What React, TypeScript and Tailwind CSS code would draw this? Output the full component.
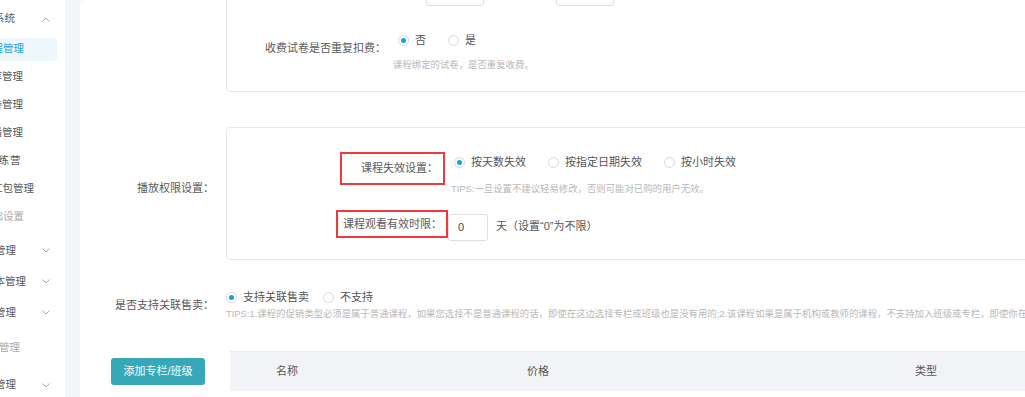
import React from 'react';

function Chevron({ up = false }: { up?: boolean }) {
  return (
    <svg width="8" height="5" viewBox="0 0 8 5" className="shrink-0">
      <polyline
        points={up ? '0.5,4.5 4,1 7.5,4.5' : '0.5,0.5 4,4 7.5,0.5'}
        fill="none"
        stroke="#a8a8a8"
        strokeWidth="1"
      />
    </svg>
  );
}

function Radio({ checked = false, label }: { checked?: boolean; label: string }) {
  return (
    <label className="flex items-center gap-[6px]">
      <span className="flex h-[11px] w-[11px] items-center justify-center rounded-full border border-[#d6d9de] bg-white">
        {checked && <span className="h-[5px] w-[5px] rounded-full bg-[#1a9fe0]" />}
      </span>
      <span className="text-[11px] leading-[16px] text-[#555]">{label}</span>
    </label>
  );
}

function SideItem({
  text,
  offset,
  active = false,
  light = false,
}: {
  text: string;
  offset: string;
  active?: boolean;
  light?: boolean;
}) {
  return (
    <div className="flex h-[28px] items-center">
      <div
        className={`flex h-[23px] w-[57px] items-center overflow-hidden rounded-r-[4px] ${
          active ? 'bg-[#eef7fc] text-[#1c9fd6]' : light ? 'text-[#a9a9a9]' : 'text-[#555]'
        }`}
      >
        <span className={`whitespace-nowrap text-[10.5px] ${offset}`}>{text}</span>
      </div>
    </div>
  );
}

function SideGroup({ text, offset, height, light = false, arrow = true }: {
  text: string;
  offset: string;
  height: string;
  light?: boolean;
  arrow?: boolean;
}) {
  return (
    <div className={`flex items-center justify-between pr-[15px] ${height}`}>
      <div className="w-[40px] overflow-hidden">
        <span className={`block whitespace-nowrap text-[10.5px] ${offset} ${light ? 'text-[#a9a9a9]' : 'text-[#555]'}`}>
          {text}
        </span>
      </div>
      {arrow && <Chevron />}
    </div>
  );
}

function Sidebar() {
  return (
    <aside className="w-[65px] shrink-0 overflow-hidden bg-white pt-[5px]">
      <div className="flex h-[28px] items-center justify-between pr-[15px]">
        <div className="w-[40px] overflow-hidden">
          <span className="block whitespace-nowrap text-[10.5px] text-[#555] ml-[-6px]">系统</span>
        </div>
        <Chevron up />
      </div>
      <div className="mt-[2px]">
        <SideItem text="课程管理" offset="ml-[-18px]" active />
        <SideItem text="题库管理" offset="ml-[-19px]" />
        <SideItem text="试卷管理" offset="ml-[-19px]" />
        <SideItem text="直播管理" offset="ml-[-19px]" />
        <SideItem text="训练营" offset="ml-[-13px] tracking-[1px]" />
        <SideItem text="红包管理" offset="ml-[-8px]" />
        <SideItem text="基础设置" offset="ml-[-18px]" light />
      </div>
      <div className="mt-[4px]">
        <SideGroup text="订单管理" offset="ml-[-26px]" height="h-[31px]" />
        <SideGroup text="版本管理" offset="ml-[-16px]" height="h-[31px]" />
        <SideGroup text="用户管理" offset="ml-[-26px]" height="h-[31px]" />
        <SideGroup text="财务管理" offset="ml-[-22px]" height="h-[40px]" light arrow={false} />
        <SideGroup text="营销管理" offset="ml-[-26px]" height="h-[34px]" />
      </div>
    </aside>
  );
}

export default function App() {
  return (
    <div className="flex h-[397px] w-[1025px] overflow-hidden bg-[#f4f5f9] [font-family:'Liberation_Sans','Noto_Sans_CJK_SC',sans-serif]">
      <Sidebar />
      <div className="w-[15px] shrink-0 bg-[#f4f5f9]" />
      <main className="w-[1000px] shrink-0 rounded-tl-[4px] bg-white">
        {/* 试卷设置（上方已滚出） */}
        <div className="ml-[146px] mr-[20px] mt-[-40px] rounded-[4px] border border-[#e6e7ea] pb-[19px] pt-[15px]">
          <div className="flex">
            <div className="ml-[199px] h-[30px] w-[58px] rounded-[3px] border border-[#dcdfe3]" />
            <div className="ml-[72px] h-[30px] w-[58px] rounded-[3px] border border-[#dcdfe3]" />
          </div>
          <div className="mt-[23px] flex">
            <div className="w-[171px] shrink-0 pr-[12px] pt-[11px] text-right text-[11px] leading-[16px] text-[#5a5a5a]">
              收费试卷是否重复扣费：
            </div>
            <div className="flex flex-col">
              <div className="flex h-[22px] items-center gap-[22px]">
                <Radio checked label="否" />
                <Radio label="是" />
              </div>
              <div className="mt-[7px] ml-[-5px] text-[9.4px] leading-[14px] text-[#b8b8b8]">
                课程绑定的试卷，是否重复收费。
              </div>
            </div>
          </div>
        </div>

        {/* 播放权限设置 */}
        <div className="mt-[35px] flex items-center">
          <div className="mb-[12px] w-[146px] shrink-0 pr-[12px] text-right text-[11px] leading-[16px] text-[#5a5a5a]">
            播放权限设置：
          </div>
          <div className="mr-[20px] flex-1 rounded-[4px] border border-[#e6e7ea] pb-[18px] pt-[24px]">
            <div className="flex items-start">
              <div className="flex w-[221px] shrink-0 justify-end pr-[3px]">
                <div className="flex h-[33px] w-[105px] items-center justify-end border-2 border-[#ea3a3c] pr-[5px] text-[11px] text-[#5a5a5a]">
                  课程失效设置：
                </div>
              </div>
              <div className="flex flex-col pl-[3px]">
                <div className="ml-[3px] flex h-[20px] items-center gap-[22px]">
                  <Radio checked label="按天数失效" />
                  <Radio label="按指定日期失效" />
                  <Radio label="按小时失效" />
                </div>
                <div className="mt-[10px] text-[9.4px] leading-[14px] text-[#b8b8b8]">
                  TIPS:一旦设置不建议轻易修改，否则可能对已购的用户无效。
                </div>
              </div>
            </div>
            <div className="mt-[14px] flex items-start">
              <div className="flex w-[221px] shrink-0 justify-end">
                <div className="flex h-[28px] w-[112px] items-center justify-end border-2 border-[#ea3a3c] pr-[4px] text-[11px] text-[#5a5a5a]">
                  课程观看有效时限：
                </div>
              </div>
              <div className="mt-[4px] flex h-[27px] w-[40px] items-center rounded-[3px] border border-[#dcdfe3] pl-[9px] text-[11px] text-[#444]">
                0
              </div>
              <div className="ml-[8px] mt-[8px] text-[11px] leading-[16px] text-[#555]">天（设置“0”为不限）</div>
            </div>
          </div>
        </div>

        {/* 是否支持关联售卖 */}
        <div className="mt-[27px] flex items-start">
          <div className="w-[146px] shrink-0 pr-[12px] pt-[10px] text-right text-[11px] leading-[16px] text-[#5a5a5a]">
            是否支持关联售卖：
          </div>
          <div className="flex min-w-0 flex-col">
            <div className="flex h-[20px] items-center gap-[14px]">
              <Radio checked label="支持关联售卖" />
              <Radio label="不支持" />
            </div>
            <div className="whitespace-nowrap text-[9.4px] leading-[14px] text-[#b8b8b8]">
              TIPS:1.课程的促销类型必须是属于普通课程，如果您选择不是普通课程的话，即使在这边选择专栏或班级也是没有用的;2.该课程如果是属于机构或教师的课程，不支持加入班级或专栏，即使你在这边选择专栏或班级也是没有用的。
            </div>
          </div>
        </div>

        {/* 关联专栏/班级 */}
        <div className="mt-[30px] flex items-center pl-[31px]">
          <button className="h-[27px] w-[94px] shrink-0 rounded-[3px] bg-[#37a8b8] text-[11px] text-white">
            添加专栏/班级
          </button>
          <div className="ml-[25px] flex h-[40px] flex-1 items-center border-t border-[#e9eaee] bg-[#f2f3f7] text-[11px] text-[#555]">
            <span className="w-[297px] shrink-0 pl-[46px]">名称</span>
            <span className="w-[388px] shrink-0">价格</span>
            <span>类型</span>
          </div>
        </div>
      </main>
    </div>
  );
}
